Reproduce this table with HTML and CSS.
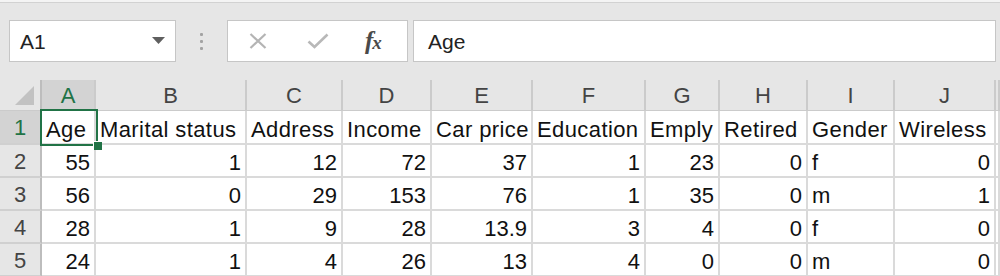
FILE: index.html
```html
<!DOCTYPE html>
<html>
<head>
<meta charset="utf-8">
<link rel="stylesheet" href="styles.css">
</head>
<body>
<div class="topstrip"></div>
<div class="toolbar">
  <div class="namebox">
    <span class="nb-text">A1</span>
    <svg class="nb-arrow" width="13" height="7" viewBox="0 0 13 7"><path d="M0 0 H13 L6.5 7 Z" fill="#5f5f5f"/></svg>
  </div>
  <div class="sep">
    <span class="dot"></span><span class="dot"></span><span class="dot"></span>
  </div>
  <div class="fbuttons">
    <svg class="ic-x" width="20" height="16" viewBox="0 0 20 16"><path d="M2.5 1 L17.5 15 M17.5 1 L2.5 15" stroke="#b4b4b4" stroke-width="2.2" fill="none"/></svg>
    <svg class="ic-check" width="22" height="16" viewBox="0 0 22 16"><path d="M1.5 8.5 L7.5 14 L20.5 1.5" stroke="#b8b8b8" stroke-width="2.6" fill="none"/></svg>
    <span class="fx">f<span class="fx-x">x</span></span>
  </div>
  <div class="fbar"><span class="fbar-text">Age</span></div>
</div>

<div class="sheet">
  <div class="grid">
    <div class="h corner"><span class="tri"></span></div>
    <div class="h col sel">A</div>
    <div class="h col">B</div>
    <div class="h col">C</div>
    <div class="h col">D</div>
    <div class="h col">E</div>
    <div class="h col">F</div>
    <div class="h col">G</div>
    <div class="h col">H</div>
    <div class="h col">I</div>
    <div class="h col">J</div>
    <div class="h col"></div>

    <div class="h row sel">1</div>
    <div class="c t">Age</div>
    <div class="c t">Marital status</div>
    <div class="c t">Address</div>
    <div class="c t">Income</div>
    <div class="c t">Car price</div>
    <div class="c t">Education</div>
    <div class="c t">Emply</div>
    <div class="c t">Retired</div>
    <div class="c t">Gender</div>
    <div class="c t">Wireless</div>
    <div class="c"></div>

    <div class="h row">2</div>
    <div class="c n">55</div><div class="c n">1</div><div class="c n">12</div><div class="c n">72</div><div class="c n">37</div><div class="c n">1</div><div class="c n">23</div><div class="c n">0</div><div class="c t">f</div><div class="c n">0</div><div class="c"></div>

    <div class="h row">3</div>
    <div class="c n">56</div><div class="c n">0</div><div class="c n">29</div><div class="c n">153</div><div class="c n">76</div><div class="c n">1</div><div class="c n">35</div><div class="c n">0</div><div class="c t">m</div><div class="c n">1</div><div class="c"></div>

    <div class="h row">4</div>
    <div class="c n">28</div><div class="c n">1</div><div class="c n">9</div><div class="c n">28</div><div class="c n">13.9</div><div class="c n">3</div><div class="c n">4</div><div class="c n">0</div><div class="c t">f</div><div class="c n">0</div><div class="c"></div>

    <div class="h row">5</div>
    <div class="c n">24</div><div class="c n">1</div><div class="c n">4</div><div class="c n">26</div><div class="c n">13</div><div class="c n">4</div><div class="c n">0</div><div class="c n">0</div><div class="c t">m</div><div class="c n">0</div><div class="c"></div>
  </div>
  <div class="selbox"><span class="handle"></span></div>
</div>
</body>
</html>
```

FILE: styles.css
```css
html, body {
  margin: 0;
  padding: 0;
}
body {
  width: 1000px;
  height: 276px;
  overflow: hidden;
  background: #e6e6e6;
  font-family: "Liberation Sans", Arial, sans-serif;
  color: #000;
}
.topstrip {
  height: 2px;
  background: #f4f4f4;
  border-bottom: 1px solid #d2d2d2;
}
.toolbar {
  display: flex;
  align-items: stretch;
  height: 42px;
  margin-top: 17px;
  padding-left: 9px;
}
.namebox {
  box-sizing: border-box;
  width: 167px;
  background: #fff;
  border: 1px solid #c6c6c6;
  display: flex;
  align-items: center;
  justify-content: space-between;
  padding: 0 10px 0 10px;
}
.nb-text {
  font-size: 21px;
  color: #222;
  position: relative;
  top: 1px;
}
.nb-arrow {
  position: relative;
  top: -1px;
}
.sep {
  width: 51px;
  display: flex;
  flex-direction: column;
  align-items: center;
  justify-content: center;
  gap: 4px;
}
.dot {
  width: 3px;
  height: 3px;
  background: #a3a3a3;
  border-radius: 1px;
}
.fbuttons {
  box-sizing: border-box;
  width: 181px;
  background: #fff;
  border: 1px solid #c6c6c6;
  display: flex;
  align-items: center;
  padding-left: 20px;
}
.ic-x { margin-right: 39px; }
.ic-check { margin-right: 36px; }
.fx {
  font-family: "Liberation Serif", "Times New Roman", serif;
  font-style: italic;
  font-weight: bold;
  font-size: 25px;
  color: #4a4a4a;
  letter-spacing: -1px;
}
.fx-x {
  font-size: 19px;
}
.fbar {
  box-sizing: border-box;
  width: 583px;
  margin-left: 5px;
  background: #fff;
  border: 1px solid #c6c6c6;
  display: flex;
  align-items: center;
  padding-left: 14px;
}
.fbar-text {
  font-size: 21px;
  color: #222;
  position: relative;
  top: 1px;
}
.sheet {
  position: relative;
  margin-top: 18px;
}
.grid {
  display: grid;
  grid-template-columns: 42px 54px 151px 96px 89px 101px 113px 74px 88px 87px 101px 4px;
  grid-template-rows: 31px 34px 33px 33px 33px 33px;
  font-size: 22px;
}
.h {
  box-sizing: border-box;
  background: #e6e6e6;
  color: #444;
  display: flex;
  align-items: center;
  justify-content: center;
}
.col {
  border-right: 2px solid #cbcbcb;
  border-bottom: 1px solid #cbcbcb;
  padding-top: 2px;
}
.row {
  border-right: 2px solid #bdbdbd;
  border-bottom: 2px solid #d0d0d0;
  padding-top: 2px;
}
.corner {
  position: relative;
  border-right: 2px solid #bdbdbd;
  border-bottom: 1px solid #cbcbcb;
}
.tri {
  position: absolute;
  right: 6px;
  bottom: 5px;
  width: 0;
  height: 0;
  border-left: 19px solid transparent;
  border-bottom: 19px solid #c2c2c2;
}
.sel {
  background: #d3d3d3;
  color: #217346;
}
.c {
  box-sizing: border-box;
  background: #fff;
  color: #111;
  border-right: 2px solid #dadada;
  border-bottom: 2px solid #dadada;
  display: flex;
  align-items: flex-end;
  line-height: 25px;
  white-space: nowrap;
  overflow: visible;
}
.t {
  justify-content: flex-start;
  padding-left: 4px;
  padding-bottom: 1px;
  letter-spacing: 0.4px;
}
.n {
  justify-content: flex-end;
  padding-right: 4px;
  padding-bottom: 1px;
}
.selbox {
  position: absolute;
  left: 40px;
  top: 29px;
  width: 58px;
  height: 37px;
  box-sizing: border-box;
  border: 2px solid #217346;
}
.handle {
  position: absolute;
  right: -6px;
  bottom: -6px;
  width: 8px;
  height: 8px;
  background: #217346;
  border-left: 1px solid #fff;
  border-top: 1px solid #fff;
}
```
